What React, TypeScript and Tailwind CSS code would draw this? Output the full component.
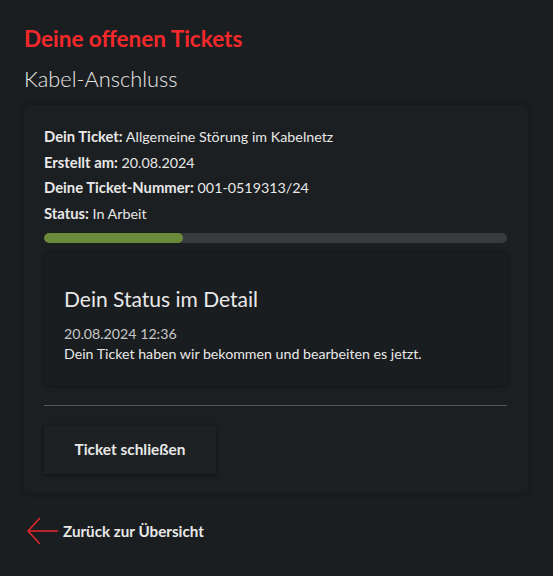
export default function App() {
  return (
    <div className="min-h-[576px] bg-[#1a1c1e] p-[3px] font-['Lato',sans-serif] text-[#e8e8e8]">
      <div className="min-h-[570px] bg-[#1b1e20] pl-[21px] pr-[22px] pt-[22px] pb-6">
        <h1 className="text-[22.5px] font-bold leading-[28px] text-[#f5282b]">Deine offenen Tickets</h1>
        <h2 className="mt-[12px] text-[21.8px] font-light leading-[28px]">Kabel-Anschluss</h2>

        {/* ── CARD ─────────────────────────────────────── */}
        <div className="mt-[12px] rounded-md bg-[#1c1f21] pl-5 pr-[21px] pt-[19px] pb-[19px] shadow-[0_0_6px_rgba(0,0,0,0.35)]">
          <div className="text-[14.3px] leading-[25.5px]">
            <p><span className="text-[14.8px] font-bold">Dein Ticket:</span> Allgemeine Störung im Kabelnetz</p>
            <p><span className="text-[14.8px] font-bold">Erstellt am:</span> 20.08.2024</p>
            <p><span className="text-[14.8px] font-bold">Deine Ticket-Nummer:</span> 001-0519313/24</p>
            <p><span className="text-[14.8px] font-bold">Status:</span> In Arbeit</p>
          </div>

          <div className="mt-[7px] h-[10px] w-full overflow-hidden rounded-full bg-[#383b3e]">
            <div className="h-full w-[30%] rounded-full bg-[#6b8a3a]" />
          </div>

          <div className="mt-[10px] rounded bg-[#1a1d1f] px-5 pt-[33px] pb-[22px] shadow-[0_0_5px_rgba(0,0,0,0.4)]">
            <h3 className="text-[21px] leading-[26px]">Dein Status im Detail</h3>
            <p className="mt-[12px] text-[14.2px] leading-[20px] text-[#c8c8c8]">20.08.2024 12:36</p>
            <p className="text-[14.2px] leading-[20px]">Dein Ticket haben wir bekommen und bearbeiten es jetzt.</p>
          </div>

          <div className="mt-[19px] h-px bg-[#55585b]" />

          <button className="mt-[20px] h-[48px] w-[172px] bg-[#1e2123] text-[15.4px] font-bold shadow-[0_1px_4px_rgba(0,0,0,0.5)]">
            Ticket schließen
          </button>
        </div>

        {/* ── BACK LINK ────────────────────────────────── */}
        <a href="#" className="mt-[24px] ml-[3px] flex items-center gap-[5px] text-[15.2px] font-bold">
          <svg width="31" height="28" viewBox="0 0 31 28" fill="none" stroke="#e0282b" strokeWidth="1.6">
            <path d="M31 14H1" />
            <path d="M13 1L1 14L13 27" />
          </svg>
          Zurück zur Übersicht
        </a>
      </div>
    </div>
  )
}
